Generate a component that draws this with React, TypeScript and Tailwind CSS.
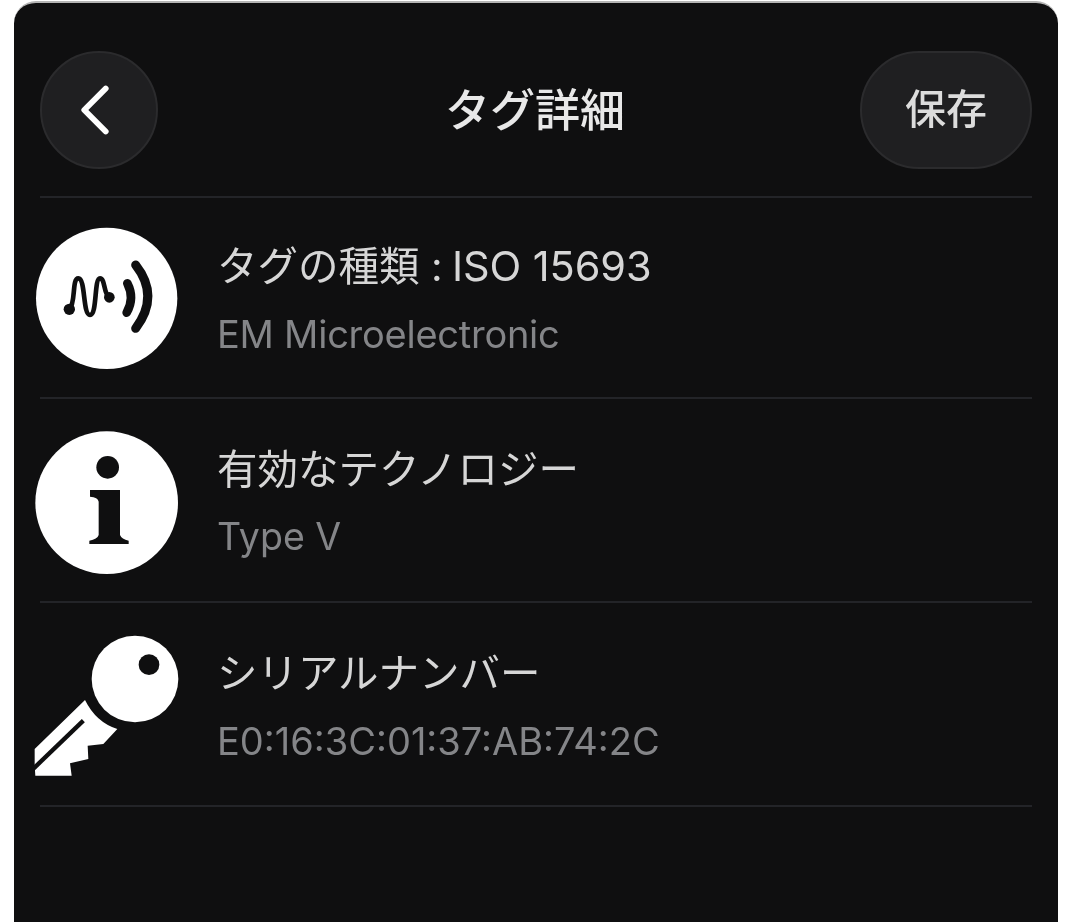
const font = { fontFamily: '"Inter", "Noto Sans CJK JP", sans-serif' };

function WaveIcon() {
  return (
    <svg viewBox="0 0 540 480" className="w-[180px] h-[160px] block">
      <circle cx="260" cy="235" r="212" fill="#ffffff" />
      <circle cx="148" cy="268" r="17" fill="#0f0f10" />
      <circle cx="268" cy="232" r="16" fill="#0f0f10" />
      <path d="M148 268 C168 250 155 175 175 175 C197 175 188 285 210 285 C232 285 222 175 240 175 C256 175 250 222 268 232" fill="none" stroke="#0f0f10" strokeWidth="14" strokeLinecap="round" />
      <path d="M322 190 Q345 235 320 278" fill="none" stroke="#0f0f10" strokeWidth="26" strokeLinecap="round" />
      <path d="M347 135 Q420 228 347 325" fill="none" stroke="#0f0f10" strokeWidth="27" strokeLinecap="round" />
    </svg>
  );
}

function InfoIcon() {
  return (
    <svg viewBox="0 0 540 480" className="w-[180px] h-[160px] block">
      <circle cx="260" cy="248" r="214" fill="#ffffff" />
      <circle cx="263" cy="142" r="34" fill="#0f0f10" />
      <path d="M210 210 L300 210 L300 345 Q305 358 326 362 L326 372 L208 372 L208 362 Q232 358 236 345 L236 245 Q234 232 210 230 Z" fill="#0f0f10" />
    </svg>
  );
}

function KeyIcon() {
  return (
    <svg viewBox="0 0 540 480" className="w-[180px] h-[160px] block">
      <circle cx="345" cy="165" r="130" fill="#ffffff" />
      <circle cx="387" cy="122" r="31" fill="#0f0f10" />
      <path d="M195 228 L44 375 L44 425 L46 455 L155 455 L150 418 L205 405 L203 365 L250 360 L292 315 Q228 295 195 228 Z" fill="#ffffff" />
      <path d="M190 290 L38 436" fill="none" stroke="#0f0f10" strokeWidth="13" />
    </svg>
  );
}

function Row({ icon, title, sub, tall, subClass }: { icon: React.ReactNode; title: React.ReactNode; sub: string; tall?: boolean; subClass: string }) {
  return (
    <div className={tall ? "flex h-[204px] items-start border-b-2 border-[#232428]" : "flex h-[201px] items-start border-b-2 border-[#232428]"}>
      <div className="w-[178px] shrink-0 -ml-[4px]">
        <div className={tall ? "-ml-[16px] mt-[21px]" : "-ml-[16px] mt-[22px]"}>{icon}</div>
      </div>
      <div className="flex flex-col pl-[3px]">
        <div className={tall ? "text-[40.5px] leading-[48px] mt-[47px] text-[#d6d6d6]" : "text-[40.5px] leading-[48px] mt-[44px] text-[#d6d6d6]"}>{title}</div>
        <div className={subClass}>{sub}</div>
      </div>
    </div>
  );
}

export default function App() {
  return (
    <div className="w-[1080px] h-[922px] bg-white overflow-hidden" style={font}>
      <div className="ml-[14px] mt-[1px] w-[1044px] h-[921px] rounded-t-[22px] bg-[#0f0f10] border-t-2 border-[#b5b5b5] px-[26px] pt-[48px] blur-[0.7px]">
        <div className="flex items-center justify-between h-[118px]">
          <div className="w-[118px] h-[118px] rounded-full bg-[#1f1f21] border-2 border-[#2b2b2d] flex items-center justify-center">
            <svg viewBox="0 0 40 56" className="w-[36px] h-[50px] -ml-[8px]">
              <path d="M32 4 L8 28 L32 52" fill="none" stroke="#ffffff" strokeWidth="6.5" strokeLinecap="round" strokeLinejoin="round" />
            </svg>
          </div>
          <div className="text-[45px] leading-none font-medium text-[#e8e8e8] ml-[52px]">タグ詳細</div>
          <div className="w-[172px] h-[118px] rounded-full bg-[#1f1f21] border-2 border-[#2b2b2d] flex items-center justify-center text-[41px] font-medium text-[#dcdcdc]">保存</div>
        </div>
        <div className="h-[29px] border-b-2 border-[#232428]" />
        <Row
          icon={<WaveIcon />}
          title={<>タグの種類 : <span className="text-[41.5px] -ml-[2px] tracking-[-0.1px]">ISO 15693</span></>}
          sub="EM Microelectronic"
          subClass="text-[38px] leading-[44px] mt-[21px] tracking-[-0.25px] text-[#848588]"
        />
        <Row tall icon={<InfoIcon />} title="有効なテクノロジー" sub="Type V" subClass="text-[37.5px] leading-[44px] mt-[21px] text-[#848588]" />
        <Row tall icon={<KeyIcon />} title="シリアルナンバー" sub="E0:16:3C:01:37:AB:74:2C" subClass="text-[38px] leading-[44px] mt-[21px] text-[#848588]" />
      </div>
    </div>
  );
}
